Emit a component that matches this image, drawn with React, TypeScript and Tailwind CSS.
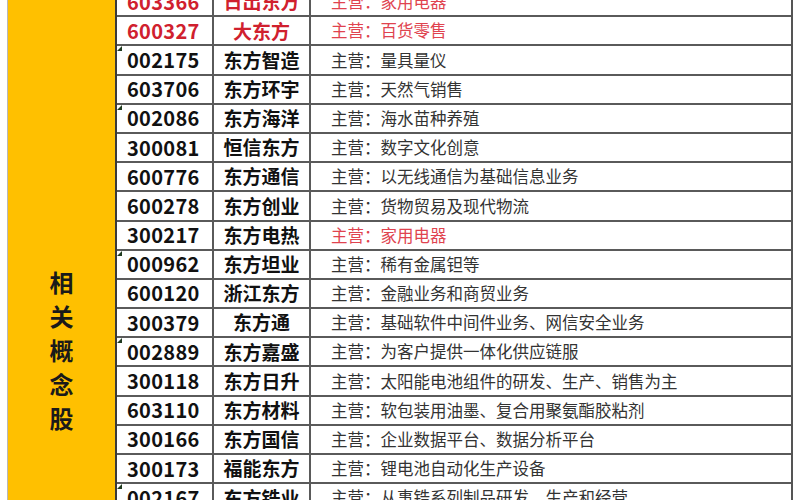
import React from "react";

type Row = {
  code: string;
  name: string;
  biz: string;
  red?: boolean;
  redBiz?: boolean;
  flag?: boolean;
};

const rows: Row[] = [
  { code: "603366", name: "日出东方", biz: "家用电器", red: true, redBiz: true },
  { code: "600327", name: "大东方", biz: "百货零售", red: true, redBiz: true },
  { code: "002175", name: "东方智造", biz: "量具量仪", flag: true },
  { code: "603706", name: "东方环宇", biz: "天然气销售" },
  { code: "002086", name: "东方海洋", biz: "海水苗种养殖", flag: true },
  { code: "300081", name: "恒信东方", biz: "数字文化创意" },
  { code: "600776", name: "东方通信", biz: "以无线通信为基础信息业务" },
  { code: "600278", name: "东方创业", biz: "货物贸易及现代物流" },
  { code: "300217", name: "东方电热", biz: "家用电器", redBiz: true },
  { code: "000962", name: "东方坦业", biz: "稀有金属钽等", flag: true },
  { code: "600120", name: "浙江东方", biz: "金融业务和商贸业务" },
  { code: "300379", name: "东方通", biz: "基础软件中间件业务、网信安全业务" },
  { code: "002889", name: "东方嘉盛", biz: "为客户提供一体化供应链服", flag: true },
  { code: "300118", name: "东方日升", biz: "太阳能电池组件的研发、生产、销售为主" },
  { code: "603110", name: "东方材料", biz: "软包装用油墨、复合用聚氨酯胶粘剂" },
  { code: "300166", name: "东方国信", biz: "企业数据平台、数据分析平台" },
  { code: "300173", name: "福能东方", biz: "锂电池自动化生产设备" },
  { code: "002167", name: "东方锆业", biz: "从事锆系列制品研发、生产和经营", flag: true },
];

const font = { fontFamily: '"Noto Sans CJK SC", "Noto Sans", sans-serif' };

export default function App() {
  return (
    <div className="relative h-[500px] w-[800px] overflow-hidden bg-white" style={font}>
      <div className="mt-[-12px] flex pl-[7px]">
        {/* label column */}
        <div className="w-[110px] shrink-0 border-l border-r-2 border-l-[#b8b8b8] border-r-[#3a3a3a] bg-[#FFC000]">
          <div className="flex flex-col items-center pt-[277px] text-[24px] font-bold leading-[34px] text-[#1a1a1a]">
            {"相关概念股".split("").map((c) => (
              <span key={c}>{c}</span>
            ))}
          </div>
        </div>

        {/* table */}
        <div className="w-[676px] shrink-0 border-r-2 border-[#555]">
          {rows.map((r) => (
            <div key={r.code} className="flex h-[29.2px] border-b-2 border-[#5a5a5a]">
              <div
                className={`relative flex w-[97px] shrink-0 items-center border-r-2 border-[#5a5a5a] pl-[10px] text-[20px] font-bold tracking-[0.3px] ${
                  r.red ? "text-[#d0202e]" : "text-[#111]"
                }`}
              >
                {r.flag && (
                  <span className="absolute left-0 top-0 h-0 w-0 rotate-90 border-l-[5px] border-t-[5px] border-l-transparent border-t-[#1f3a1f]" />
                )}
                {r.code}
              </div>
              <div
                className={`flex w-[97px] shrink-0 items-center justify-center border-r-2 border-[#5a5a5a] text-[19px] font-bold ${
                  r.red ? "text-[#d0202e]" : "text-[#111]"
                }`}
              >
                {r.name}
              </div>
              <div
                className={`flex flex-1 items-center pl-[20px] text-[16.5px] ${
                  r.redBiz ? "text-[#e0434f]" : "text-[#333]"
                }`}
              >
                主营：{r.biz}
              </div>
            </div>
          ))}
        </div>
      </div>
    </div>
  );
}
